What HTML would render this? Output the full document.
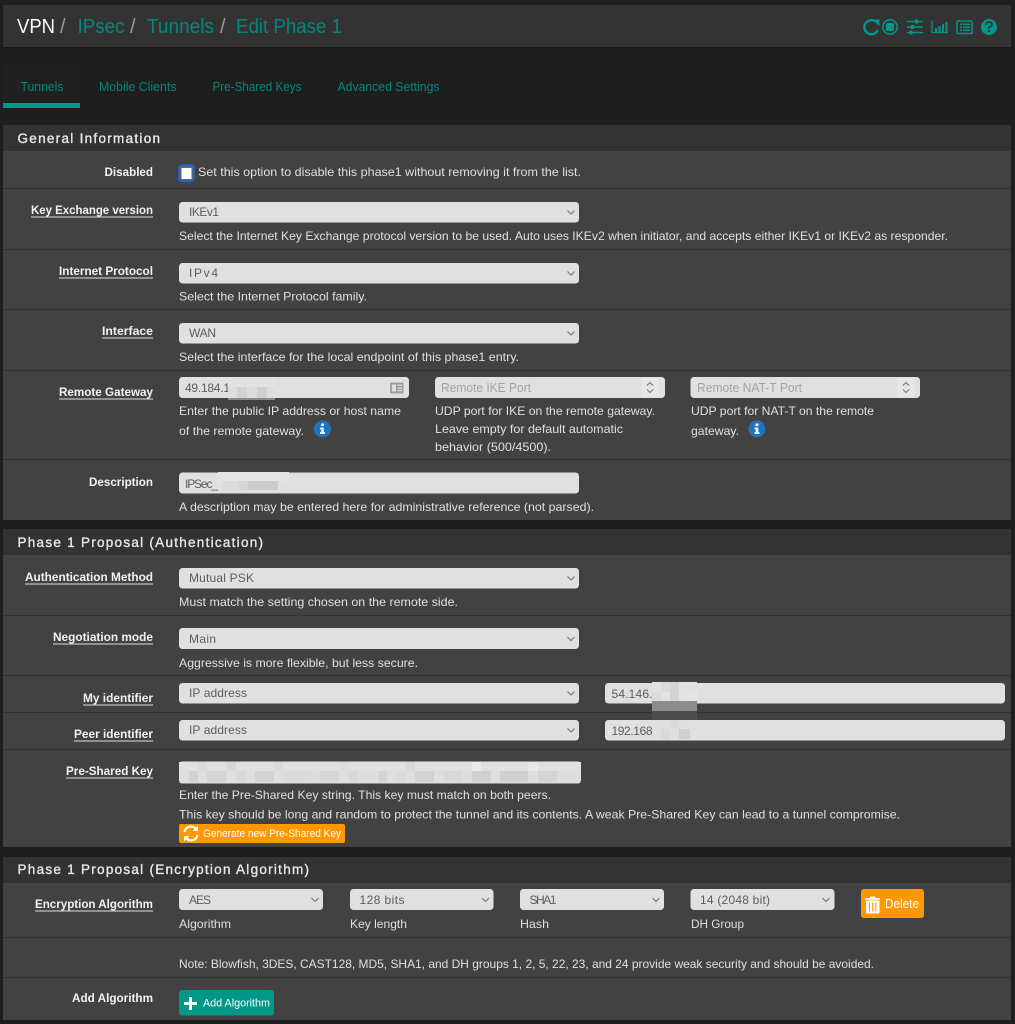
<!DOCTYPE html>
<html lang="en"><head><meta charset="utf-8"><title>VPN / IPsec / Tunnels / Edit Phase 1</title>
<style>
html,body{margin:0;padding:0;background:#1e1e1e;width:1015px;height:1024px;overflow:hidden}
svg{display:block}
text{font-family:"Liberation Sans",sans-serif;font-size:12px;fill:#e0e0e0;white-space:pre}
.h1{font-size:20px}.t{fill:#00897b}.w{fill:#fff}.g{fill:#9a9a9a}
.tab{font-size:12.5px;fill:#00897b}
.ph{font-size:13.5px;fill:#e8e8e8;stroke:#e8e8e8;stroke-width:.35px}
.l{font-weight:bold;fill:#f2f2f2}
.v{font-size:12px;fill:#5c5c5c}.p{font-size:12.5px;fill:#a3a3a3}
.b{font-size:11px;fill:#fff}
</style></head><body>
<svg width="1015" height="1024" viewBox="0 0 1015 1024" xmlns="http://www.w3.org/2000/svg">
<defs>
<g id="chev"><path d="M-3.500-1.500 0 2 3.500-1.500" fill="none" stroke="#777" stroke-width="1.200"/></g>
<g id="spin"><rect x="-8" y="-9.500" width="17" height="19" fill="#e6e6e6"/><path d="M-2.500-2 0.500-5 3.500-2M-2.500 2 0.500 5 3.500 2" fill="none" stroke="#777" stroke-width="1.100"/></g>
<g id="info"><circle r="8.500" fill="#1f74bd"/><rect x="-1.500" y="-5.500" width="3" height="2.500" fill="#e8f0f8"/><path d="M-2.500-1.500H1.300V3H2.500V5H-2.500V3H-1.300V.5H-2.500Z" fill="#e8f0f8"/></g>
</defs>

<!-- header -->
<rect x="3" y="5" width="1008" height="42" fill="#333"/>
<rect x="3" y="47" width="1008" height="1" fill="#1a1a1a"/>
<text class="h1 w" x="17" y="33" textLength="38" lengthAdjust="spacingAndGlyphs">VPN</text>
<text class="h1 g" x="60" y="33">/</text>
<text class="h1 t" x="77.500" y="33" textLength="47" lengthAdjust="spacingAndGlyphs">IPsec</text>
<text class="h1 g" x="130" y="33">/</text>
<text class="h1 t" x="147" y="33" textLength="67" lengthAdjust="spacingAndGlyphs">Tunnels</text>
<text class="h1 g" x="220" y="33">/</text>
<text class="h1 t" x="236" y="33" textLength="106" lengthAdjust="spacingAndGlyphs">Edit Phase 1</text>

<!-- header icons -->
<g fill="none" stroke="#009688" stroke-width="2.200">
<path d="M875.500 21.500A7 7 0 1 0 877.800 30" stroke-width="2.500"/>
<circle cx="890" cy="27" r="7.200" stroke-width="1.500"/>
<path d="M907 21.500H923M907 27H923M907 32.500H923" stroke-width="1.500"/>
<path d="M932 20.500V32.500H948" stroke-width="1.300"/>
<rect x="957" y="21" width="15" height="12.500" rx="1" stroke-width="1.500"/>
</g>
<path d="M872.500 19.500 879.500 19.500 879.500 26.500Z" fill="#009688"/>
<rect x="886" y="23" width="8" height="8" rx="1" fill="#009688"/>
<g fill="#009688">
<rect x="915" y="19.500" width="3" height="4"/><rect x="911" y="25" width="3" height="4"/><rect x="909.500" y="30.500" width="3" height="4"/>
<rect x="935" y="28" width="2" height="4"/><rect x="938.500" y="26" width="2" height="6"/><rect x="942" y="24" width="2" height="8"/><rect x="945.500" y="22" width="2" height="10"/>
<rect x="960" y="23.500" width="2" height="1.600"/><rect x="960" y="26.500" width="2" height="1.600"/><rect x="960" y="29.500" width="2" height="1.600"/>
<rect x="963" y="23.500" width="7" height="1.600"/><rect x="963" y="26.500" width="7" height="1.600"/><rect x="963" y="29.500" width="7" height="1.600"/>
<circle cx="989" cy="27" r="8"/>
</g>
<path d="M986 25Q986 22 989 22Q992 22 992 24.500Q992 26 990 27T989 28.500" fill="none" stroke="#333" stroke-width="1.800"/>
<rect x="988" y="30" width="2" height="2" fill="#333"/>

<!-- tabs -->
<rect x="3" y="65" width="77" height="38" fill="#202020"/>
<rect x="3" y="103" width="77" height="5" fill="#009688"/>
<text class="tab" x="20.500" y="91" textLength="43" lengthAdjust="spacingAndGlyphs">Tunnels</text>
<text class="tab" x="99" y="91" textLength="77.500" lengthAdjust="spacingAndGlyphs">Mobile Clients</text>
<text class="tab" x="212.500" y="91" textLength="89" lengthAdjust="spacingAndGlyphs">Pre-Shared Keys</text>
<text class="tab" x="337.500" y="91" textLength="102" lengthAdjust="spacingAndGlyphs">Advanced Settings</text>

<!-- panel 1 -->
<rect x="3" y="125" width="1008" height="26" fill="#333"/>
<rect x="3" y="151" width="1008" height="369" fill="#424242"/>
<text class="ph" x="17.500" y="143" textLength="142.500">General Information</text>
<g fill="#333"><rect x="3" y="188" width="1008" height="1"/><rect x="3" y="249" width="1008" height="1"/><rect x="3" y="309" width="1008" height="1"/><rect x="3" y="370" width="1008" height="1"/><rect x="3" y="459" width="1008" height="1"/></g>

<text class="l" x="104.500" y="176" textLength="48.500" lengthAdjust="spacingAndGlyphs">Disabled</text>
<rect x="179" y="165" width="15" height="16.500" rx="3.500" fill="#666" stroke="#1a62cc" stroke-width="2"/>
<rect x="181.500" y="168" width="10" height="11" fill="#fff"/>
<text x="198" y="176" textLength="383" lengthAdjust="spacingAndGlyphs">Set this option to disable this phase1 without removing it from the list.</text>

<text class="l" x="31" y="214" textLength="122" lengthAdjust="spacingAndGlyphs">Key Exchange version</text>
<rect x="31" y="216.500" width="122" height="1" fill="#ddd"/>
<rect x="179" y="202" width="400" height="20.500" rx="3.500" fill="#e0e0e0"/><use href="#chev" x="571" y="212"/>
<text class="v" x="189" y="216" textLength="30">IKEv1</text>
<text x="179" y="240" textLength="769" lengthAdjust="spacingAndGlyphs">Select the Internet Key Exchange protocol version to be used. Auto uses IKEv2 when initiator, and accepts either IKEv1 or IKEv2 as responder.</text>

<text class="l" x="59" y="275" textLength="94" lengthAdjust="spacingAndGlyphs">Internet Protocol</text>
<rect x="59" y="277.500" width="94" height="1" fill="#ddd"/>
<rect x="179" y="263" width="400" height="20.500" rx="3.500" fill="#e0e0e0"/><use href="#chev" x="571" y="273"/>
<text class="v" x="189" y="277" textLength="29">IPv4</text>
<text x="179" y="300.500" textLength="188" lengthAdjust="spacingAndGlyphs">Select the Internet Protocol family.</text>

<text class="l" x="102" y="335" textLength="51" lengthAdjust="spacingAndGlyphs">Interface</text>
<rect x="102" y="337.500" width="51" height="1" fill="#ddd"/>
<rect x="179" y="323" width="400" height="20.500" rx="3.500" fill="#e0e0e0"/><use href="#chev" x="571" y="333"/>
<text class="v" x="189" y="337" textLength="27">WAN</text>
<text x="179" y="361" textLength="340" lengthAdjust="spacingAndGlyphs">Select the interface for the local endpoint of this phase1 entry.</text>

<text class="l" x="59" y="396" textLength="94" lengthAdjust="spacingAndGlyphs">Remote Gateway</text>
<rect x="59" y="398.500" width="94" height="1" fill="#ddd"/>
<rect x="179" y="377" width="230" height="21" rx="3.500" fill="#e0e0e0"/>
<rect x="435" y="377" width="230" height="21" rx="3.500" fill="#e0e0e0"/>
<rect x="690.500" y="377" width="229.500" height="21" rx="3.500" fill="#e0e0e0"/>
<text class="v" x="185" y="392" textLength="45">49.184.1</text>
<rect x="228" y="378" width="47" height="9" fill="#e2e2e2"/>
<rect x="228" y="387" width="9" height="11" fill="#dedede"/><rect x="237" y="387" width="10" height="11" fill="#d2d2d2"/><rect x="247" y="387" width="10" height="11" fill="#dcdcdc"/><rect x="257" y="387" width="10" height="11" fill="#d0d0d0"/><rect x="267" y="387" width="8" height="11" fill="#dedede"/>
<rect x="228" y="398" width="47" height="2" fill="#8a8a8a"/>
<rect x="390" y="382.500" width="13.500" height="11" rx="1.500" fill="#a0a0a0"/><rect x="392" y="384.500" width="4" height="7" fill="#e0e0e0"/><rect x="397.500" y="384.500" width="4.500" height="1.200" fill="#e0e0e0"/><rect x="397.500" y="387.500" width="4.500" height="1.200" fill="#e0e0e0"/><rect x="397.500" y="390" width="4.500" height="1.200" fill="#e0e0e0"/>
<text class="p" x="441" y="392" textLength="90" lengthAdjust="spacingAndGlyphs">Remote IKE Port</text>
<use href="#spin" x="649.500" y="387.500"/>
<text class="p" x="697" y="392" textLength="105" lengthAdjust="spacingAndGlyphs">Remote NAT-T Port</text>
<use href="#spin" x="905.500" y="387.500"/>
<text x="179" y="415" textLength="222" lengthAdjust="spacingAndGlyphs">Enter the public IP address or host name</text>
<text x="179" y="435" textLength="125" lengthAdjust="spacingAndGlyphs">of the remote gateway.</text>
<use href="#info" x="322.500" y="429"/>
<text x="435" y="415" textLength="220" lengthAdjust="spacingAndGlyphs">UDP port for IKE on the remote gateway.</text>
<text x="435" y="433" textLength="188" lengthAdjust="spacingAndGlyphs">Leave empty for default automatic</text>
<text x="435" y="451" textLength="116" lengthAdjust="spacingAndGlyphs">behavior (500/4500).</text>
<text x="691" y="415" textLength="183" lengthAdjust="spacingAndGlyphs">UDP port for NAT-T on the remote</text>
<text x="691" y="435" textLength="48" lengthAdjust="spacingAndGlyphs">gateway.</text>
<use href="#info" x="757" y="429"/>

<text class="l" x="89" y="486" textLength="64" lengthAdjust="spacingAndGlyphs">Description</text>
<rect x="179" y="472.500" width="400" height="21" rx="3.500" fill="#e0e0e0"/>
<text class="v" x="185" y="488" textLength="33">IPSec_</text>
<rect x="218" y="472" width="71" height="9" fill="#e4e4e4"/><rect x="222" y="481" width="16" height="9" fill="#dcdcdc"/><rect x="238" y="481" width="10" height="9" fill="#d6d6d6"/><rect x="248" y="481" width="30" height="9" fill="#cbcbcb"/>
<text x="179" y="511" textLength="415" lengthAdjust="spacingAndGlyphs">A description may be entered here for administrative reference (not parsed).</text>

<!-- panel 2 -->
<rect x="3" y="529" width="1008" height="26" fill="#333"/>
<rect x="3" y="555" width="1008" height="292" fill="#424242"/>
<text class="ph" x="17.500" y="547" textLength="245.500">Phase 1 Proposal (Authentication)</text>
<g fill="#333"><rect x="3" y="615" width="1008" height="1"/><rect x="3" y="675" width="1008" height="1"/><rect x="3" y="712" width="1008" height="1"/><rect x="3" y="749" width="1008" height="1"/></g>

<text class="l" x="25" y="581" textLength="128" lengthAdjust="spacingAndGlyphs">Authentication Method</text>
<rect x="25" y="583.500" width="128" height="1" fill="#ddd"/>
<rect x="179" y="568" width="400" height="20.500" rx="3.500" fill="#e0e0e0"/><use href="#chev" x="571" y="578"/>
<text class="v" x="189" y="582" textLength="65">Mutual PSK</text>
<text x="179" y="606" textLength="279" lengthAdjust="spacingAndGlyphs">Must match the setting chosen on the remote side.</text>

<text class="l" x="53" y="641" textLength="100" lengthAdjust="spacingAndGlyphs">Negotiation mode</text>
<rect x="53" y="643.500" width="100" height="1" fill="#ddd"/>
<rect x="179" y="628" width="400" height="21" rx="3.500" fill="#e0e0e0"/><use href="#chev" x="571" y="638.500"/>
<text class="v" x="189" y="643" textLength="27">Main</text>
<text x="179" y="667" textLength="239" lengthAdjust="spacingAndGlyphs">Aggressive is more flexible, but less secure.</text>

<text class="l" x="83" y="702" textLength="70" lengthAdjust="spacingAndGlyphs">My identifier</text>
<rect x="83" y="704.500" width="70" height="1" fill="#ddd"/>
<rect x="179" y="683" width="400" height="20.500" rx="3.500" fill="#e0e0e0"/><use href="#chev" x="571" y="693"/>
<text class="v" x="189" y="697" textLength="58">IP address</text>
<rect x="605" y="683" width="400" height="20.500" rx="3.500" fill="#e0e0e0"/>
<text class="v" x="611.500" y="698" textLength="41">54.146.</text>

<text class="l" x="74" y="738" textLength="79" lengthAdjust="spacingAndGlyphs">Peer identifier</text>
<rect x="74" y="740.500" width="79" height="1" fill="#ddd"/>
<rect x="179" y="720" width="400" height="20.500" rx="3.500" fill="#e0e0e0"/><use href="#chev" x="571" y="730"/>
<text class="v" x="189" y="734" textLength="58">IP address</text>
<rect x="605" y="720" width="400" height="20.500" rx="3.500" fill="#e0e0e0"/>
<text class="v" x="611.500" y="735" textLength="41">192.168</text>

<g>
<rect x="652" y="682" width="45" height="19" fill="#e2e2e2"/>
<rect x="661" y="682" width="9" height="10" fill="#dadada"/><rect x="670" y="682" width="9" height="19" fill="#d4d4d4"/><rect x="652" y="692" width="9" height="9" fill="#dcdcdc"/><rect x="688" y="692" width="9" height="9" fill="#e6e6e6"/>
<rect x="652" y="701" width="45" height="10" fill="#8c8c8c"/>
<rect x="652" y="711" width="45" height="9" fill="#4d4d4d"/>
<rect x="652" y="720" width="38" height="19" fill="#dfdfdf"/>
<rect x="661" y="729" width="9" height="10" fill="#d8d8d8"/><rect x="670" y="720" width="9" height="9" fill="#dadada"/><rect x="679" y="729" width="11" height="10" fill="#d0d0d0"/>
</g>

<text class="l" x="66" y="775" textLength="87" lengthAdjust="spacingAndGlyphs">Pre-Shared Key</text>
<rect x="66" y="777.500" width="87" height="1" fill="#ddd"/>
<rect x="179" y="761.500" width="402" height="22" rx="3" fill="#dedede"/>
<g>
<rect x="179" y="762" width="402" height="9" fill="#e0e0e0"/>
<rect x="189" y="771" width="9" height="11" fill="#d2d2d2"/><rect x="207" y="771" width="19" height="11" fill="#d4d4d4"/><rect x="236" y="771" width="10" height="11" fill="#d8d8d8"/><rect x="255" y="771" width="19" height="11" fill="#d2d2d2"/><rect x="283" y="771" width="28" height="11" fill="#dadada"/><rect x="320" y="771" width="19" height="11" fill="#d6d6d6"/><rect x="349" y="771" width="9" height="11" fill="#d8d8d8"/><rect x="378" y="771" width="9" height="11" fill="#d4d4d4"/><rect x="396" y="771" width="10" height="11" fill="#dadada"/><rect x="415" y="771" width="19" height="11" fill="#d2d2d2"/><rect x="444" y="771" width="18" height="11" fill="#d8d8d8"/><rect x="472" y="771" width="19" height="11" fill="#d0d0d0"/><rect x="500" y="771" width="28" height="11" fill="#cfcfcf"/><rect x="538" y="771" width="19" height="11" fill="#d4d4d4"/>
<rect x="198" y="762" width="9" height="9" fill="#dadada"/><rect x="226" y="762" width="10" height="9" fill="#d8d8d8"/><rect x="274" y="762" width="9" height="9" fill="#dadada"/><rect x="340" y="762" width="9" height="9" fill="#dcdcdc"/><rect x="406" y="762" width="9" height="9" fill="#d8d8d8"/><rect x="472" y="762" width="9" height="9" fill="#eaeaea"/><rect x="528" y="762" width="10" height="9" fill="#e8e8e8"/>
</g>
<text x="179" y="799" textLength="372" lengthAdjust="spacingAndGlyphs">Enter the Pre-Shared Key string. This key must match on both peers.</text>
<text x="179" y="818.500" textLength="721" lengthAdjust="spacingAndGlyphs">This key should be long and random to protect the tunnel and its contents. A weak Pre-Shared Key can lead to a tunnel compromise.</text>
<rect x="179" y="824" width="166" height="19" rx="2" fill="#ff9800"/>
<path d="M184.500 832A6.500 6.500 0 0 1 195.500 828.500M197.500 835A6.500 6.500 0 0 1 186.500 838.500" fill="none" stroke="#fff" stroke-width="2.200"/>
<path d="M198 825.500V831H192.500ZM184 841.500V836H189.500Z" fill="#fff"/>
<text class="b" x="203" y="837" textLength="138" lengthAdjust="spacingAndGlyphs">Generate new Pre-Shared Key</text>

<!-- panel 3 -->
<rect x="3" y="857" width="1008" height="26" fill="#333"/>
<rect x="3" y="883" width="1008" height="137" fill="#424242"/>
<text class="ph" x="17.500" y="874" textLength="291.500">Phase 1 Proposal (Encryption Algorithm)</text>
<g fill="#333"><rect x="3" y="937" width="1008" height="1"/><rect x="3" y="977" width="1008" height="1"/></g>

<text class="l" x="35" y="908" textLength="118" lengthAdjust="spacingAndGlyphs">Encryption Algorithm</text>
<rect x="35" y="910.500" width="118" height="1" fill="#ddd"/>
<rect x="179" y="889" width="144" height="21" rx="3.500" fill="#e0e0e0"/><use href="#chev" x="315" y="899.500"/>
<rect x="350" y="889" width="143.500" height="21" rx="3.500" fill="#e0e0e0"/><use href="#chev" x="485.500" y="899.500"/>
<rect x="520" y="889" width="144" height="21" rx="3.500" fill="#e0e0e0"/><use href="#chev" x="656" y="899.500"/>
<rect x="690.500" y="889" width="144" height="21" rx="3.500" fill="#e0e0e0"/><use href="#chev" x="826" y="899.500"/>
<text class="v" x="189" y="904" textLength="22">AES</text>
<text class="v" x="359.500" y="904" textLength="45">128 bits</text>
<text class="v" x="529.500" y="904" textLength="27">SHA1</text>
<text class="v" x="700" y="904" textLength="70">14 (2048 bit)</text>
<text x="179" y="928" textLength="52" lengthAdjust="spacingAndGlyphs">Algorithm</text>
<text x="350" y="928" textLength="57" lengthAdjust="spacingAndGlyphs">Key length</text>
<text x="520" y="928" textLength="29" lengthAdjust="spacingAndGlyphs">Hash</text>
<text x="691" y="928" textLength="53" lengthAdjust="spacingAndGlyphs">DH Group</text>
<rect x="861" y="889" width="63" height="29" rx="3" fill="#ff9800"/>
<path d="M866 900.500H879.500V912A1.500 1.500 0 0 1 878 913.500H867.500A1.500 1.500 0 0 1 866 912Z" fill="#fff"/><rect x="865" y="898" width="15" height="1.800" fill="#fff"/><rect x="870" y="896.500" width="5" height="1.800" fill="#fff"/>
<path d="M869.500 902.500V911.500M872.700 902.500V911.500M875.900 902.500V911.500" stroke="#ff9800" stroke-width="1.100"/>
<text class="b" style="font-size:12.500px" x="885" y="908" textLength="34" lengthAdjust="spacingAndGlyphs">Delete</text>
<text x="179" y="968" textLength="695" lengthAdjust="spacingAndGlyphs">Note: Blowfish, 3DES, CAST128, MD5, SHA1, and DH groups 1, 2, 5, 22, 23, and 24 provide weak security and should be avoided.</text>

<text class="l" x="72" y="1002" textLength="81" lengthAdjust="spacingAndGlyphs">Add Algorithm</text>
<rect x="179" y="990" width="95" height="25.500" rx="2.500" fill="#009688"/>
<path d="M190.500 997V1010M184 1003.500H197" stroke="#fff" stroke-width="3"/>
<text class="b" x="203" y="1006.500" textLength="67" lengthAdjust="spacingAndGlyphs">Add Algorithm</text>
</svg>
</body></html>
